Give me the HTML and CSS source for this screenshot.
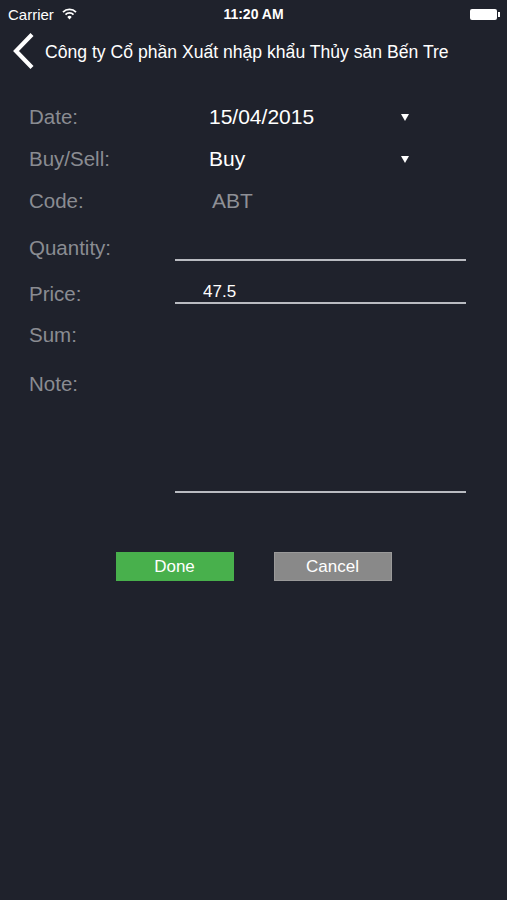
FILE: index.html
```html
<!DOCTYPE html>
<html lang="vi">
<head>
    <meta charset="UTF-8">
    <meta name="viewport" content="width=device-width, initial-scale=1.0">
    <title>Order</title>
    <link rel="stylesheet" href="styles.css">
</head>
<body>
    <div class="statusbar">
        <div class="carrier">
            Carrier
            <svg class="wifi" width="15" height="12" viewBox="0 0 15 12">
                <path d="M1 4.2 A9 9 0 0 1 14 4.2" fill="none" stroke="#fff" stroke-width="1.8"/>
                <path d="M3.5 6.6 A5.6 5.6 0 0 1 11.5 6.6" fill="none" stroke="#fff" stroke-width="1.8"/>
                <path d="M7.5 11.5 L5.3 9 A3 3 0 0 1 9.7 9 Z" fill="#fff"/>
            </svg>
        </div>
        <div class="clock">11:20 AM</div>
        <div class="battery"><span class="battery-body"></span><span class="battery-nub"></span></div>
    </div>

    <div class="navbar">
        <svg class="back" width="24" height="38" viewBox="0 0 24 38">
            <polyline points="20,2.5 4,19 20,35.5" fill="none" stroke="#fff" stroke-width="4.2"/>
        </svg>
        <div class="title">Công ty Cổ phần Xuất nhập khẩu Thủy sản Bến Tre</div>
    </div>

    <form class="form">
        <div class="row">
            <label class="label">Date:</label>
            <div class="picker">
                <span>15/04/2015</span>
                <span class="arrow"></span>
            </div>
        </div>
        <div class="row">
            <label class="label">Buy/Sell:</label>
            <div class="picker">
                <span>Buy</span>
                <span class="arrow"></span>
            </div>
        </div>
        <div class="row row-code">
            <label class="label">Code:</label>
            <div class="code">ABT</div>
        </div>
        <div class="row row-input">
            <label class="label" for="qty">Quantity:</label>
            <input class="field" id="qty" type="text" value="">
        </div>
        <div class="row row-input row-price">
            <label class="label" for="price">Price:</label>
            <input class="field" id="price" type="text" value="47.5">
        </div>
        <div class="row row-sum">
            <label class="label">Sum:</label>
        </div>
        <div class="row row-note">
            <label class="label" for="note">Note:</label>
            <textarea class="note" id="note"></textarea>
        </div>

        <div class="actions">
            <button type="button" class="btn btn-done">Done</button>
            <button type="button" class="btn btn-cancel">Cancel</button>
        </div>
    </form>
</body>
</html>
```

FILE: styles.css
```css
body {
    font-family: "Liberation Sans", Arial, sans-serif;
    background-color: #1f222c;
    color: #fff;
    margin: 0;
    height: 900px;
    overflow: hidden;
}
.statusbar {
    height: 28px;
    display: flex;
    align-items: center;
    justify-content: space-between;
    padding: 0 7px 0 8px;
    position: relative;
    font-size: 15px;
}
.carrier {
    display: flex;
    align-items: center;
    gap: 8px;
}
.clock {
    position: absolute;
    left: 0;
    right: 0;
    text-align: center;
    font-size: 14px;
    font-weight: bold;
}
.battery {
    display: flex;
    align-items: center;
}
.battery-body {
    width: 27px;
    height: 11px;
    background-color: #fff;
    border-radius: 2px;
}
.battery-nub {
    width: 2px;
    height: 5px;
    background-color: #fff;
    margin-left: 1px;
}
.navbar {
    height: 46px;
    display: flex;
    align-items: center;
    padding-left: 12px;
}
.back {
    margin-right: 9px;
}
.title {
    font-size: 17.6px;
    white-space: nowrap;
    padding-top: 2px;
}
.form {
    padding: 22px 0 0 29px;
}
.row {
    display: flex;
    align-items: center;
    height: 42px;
}
.label {
    width: 146px;
    flex-shrink: 0;
    font-size: 20.5px;
    color: #8a8c92;
    line-height: 24px;
}
.picker {
    width: 245px;
    display: flex;
    justify-content: space-between;
    align-items: center;
    padding: 0 11px 0 34px;
    box-sizing: border-box;
    font-size: 21px;
}
.arrow {
    width: 0;
    height: 0;
    border-left: 4px solid transparent;
    border-right: 4px solid transparent;
    border-top: 7px solid #fff;
}
.row-code {
    height: 45px;
    padding-bottom: 3px;
    box-sizing: border-box;
}
.code {
    padding-left: 37px;
    font-size: 21px;
    color: #8e9096;
}
.row-input {
    height: 46px;
}
.field {
    width: 291px;
    height: 26px;
    box-sizing: border-box;
    background: none;
    border: none;
    border-bottom: 2px solid #b9bbc1;
    padding: 4px 0 0 28px;
    font-family: inherit;
    font-size: 17px;
    line-height: 20px;
    color: #fff;
    outline: none;
}
.row-price .field {
    margin-top: -6px;
}
.row-sum {
    height: 36px;
}
.row-note {
    align-items: flex-start;
    height: 142px;
}
.row-note .label {
    margin-top: 19px;
}
.note {
    width: 291px;
    height: 140px;
    box-sizing: border-box;
    background: none;
    border: none;
    border-bottom: 2px solid #b9bbc1;
    resize: none;
    outline: none;
}
.actions {
    display: flex;
    justify-content: center;
    gap: 40px;
    margin: 57px 0 0 -29px;
}
.btn {
    width: 118px;
    height: 29px;
    border: none;
    font-family: inherit;
    font-size: 17px;
    color: #fff;
    padding: 0;
}
.btn-done {
    background-color: #48b04c;
}
.btn-cancel {
    background-color: #898989;
    border: 1px solid #9a9a9a;
}
```
